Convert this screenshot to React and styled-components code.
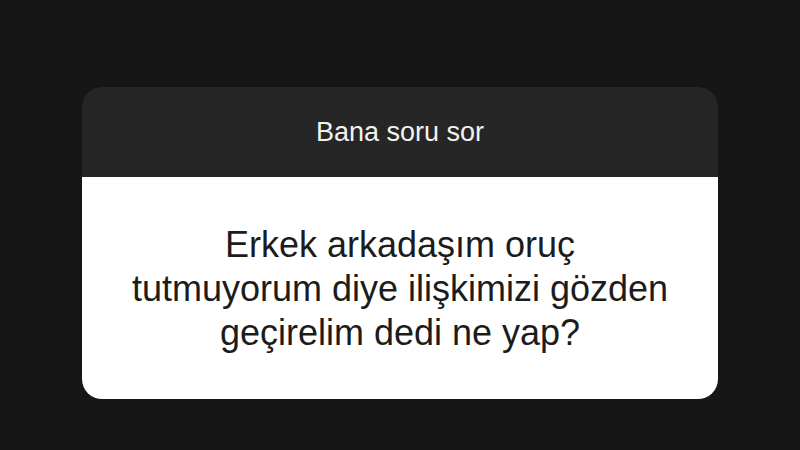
import styled, { createGlobalStyle } from "styled-components";

const GlobalStyle = createGlobalStyle`
    html, body {
        margin: 0;
        padding: 0;
        background: #161616;
    }
`;

const Page = styled.main`
    width: 800px;
    height: 450px;
    display: flex;
    align-items: flex-start;
    justify-content: center;
    padding-top: 87px;
    box-sizing: border-box;
    background: #161616;
    font-family: "Liberation Sans", Arial, sans-serif;
`;

const Card = styled.section`
    width: 636px;
    border-radius: 20px;
    overflow: hidden;
    display: flex;
    flex-direction: column;
`;

const Header = styled.header`
    height: 90px;
    display: flex;
    align-items: center;
    justify-content: center;
    background: #262626;
    color: #f2f2f2;
    font-size: 27px;
`;

const Body = styled.div`
    height: 222px;
    display: flex;
    align-items: center;
    justify-content: center;
    background: #ffffff;
`;

const Question = styled.p`
    margin: 0;
    padding-top: 2px;
    text-align: center;
    color: #1c1c1c;
    font-size: 36px;
    line-height: 44px;
`;

const App = () => {
    return (
        <>
            <GlobalStyle />
            <Page>
                <Card>
                    <Header>Bana soru sor</Header>
                    <Body>
                        <Question>
                            Erkek arkadaşım oruç<br />
                            tutmuyorum diye ilişkimizi gözden<br />
                            geçirelim dedi ne yap?
                        </Question>
                    </Body>
                </Card>
            </Page>
        </>
    );
};

export default App;
